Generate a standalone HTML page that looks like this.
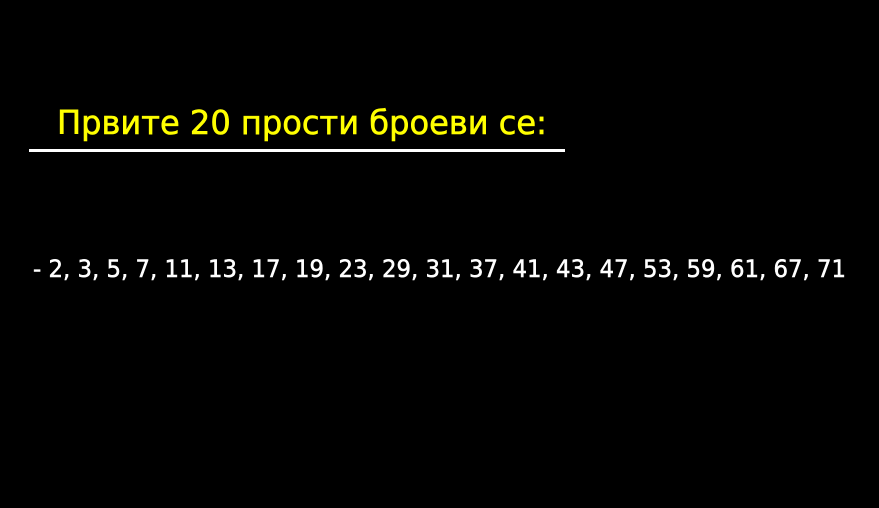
<!DOCTYPE html>
<html><head><meta charset="utf-8"><style>
html,body{margin:0;padding:0;background:#000;width:879px;height:508px;overflow:hidden}
svg{display:block}
text{font-family:"DejaVu Sans","Liberation Sans",sans-serif}
</style></head><body>
<svg width="879" height="508" viewBox="0 0 879 508">
<rect width="879" height="508" fill="#000"/>
<text x="57" y="134" font-size="33" fill="#ffff00" stroke="#ffff00" stroke-width="0.6" textLength="490" lengthAdjust="spacingAndGlyphs">Првите 20 прости броеви се:</text>
<rect x="29" y="149" width="536" height="3" fill="#fff"/>
<text x="33" y="277" font-size="24" fill="#fff" stroke="#fff" stroke-width="0.5" textLength="813" lengthAdjust="spacingAndGlyphs">- 2, 3, 5, 7, 11, 13, 17, 19, 23, 29, 31, 37, 41, 43, 47, 53, 59, 61, 67, 71</text>
</svg>
</body></html>
